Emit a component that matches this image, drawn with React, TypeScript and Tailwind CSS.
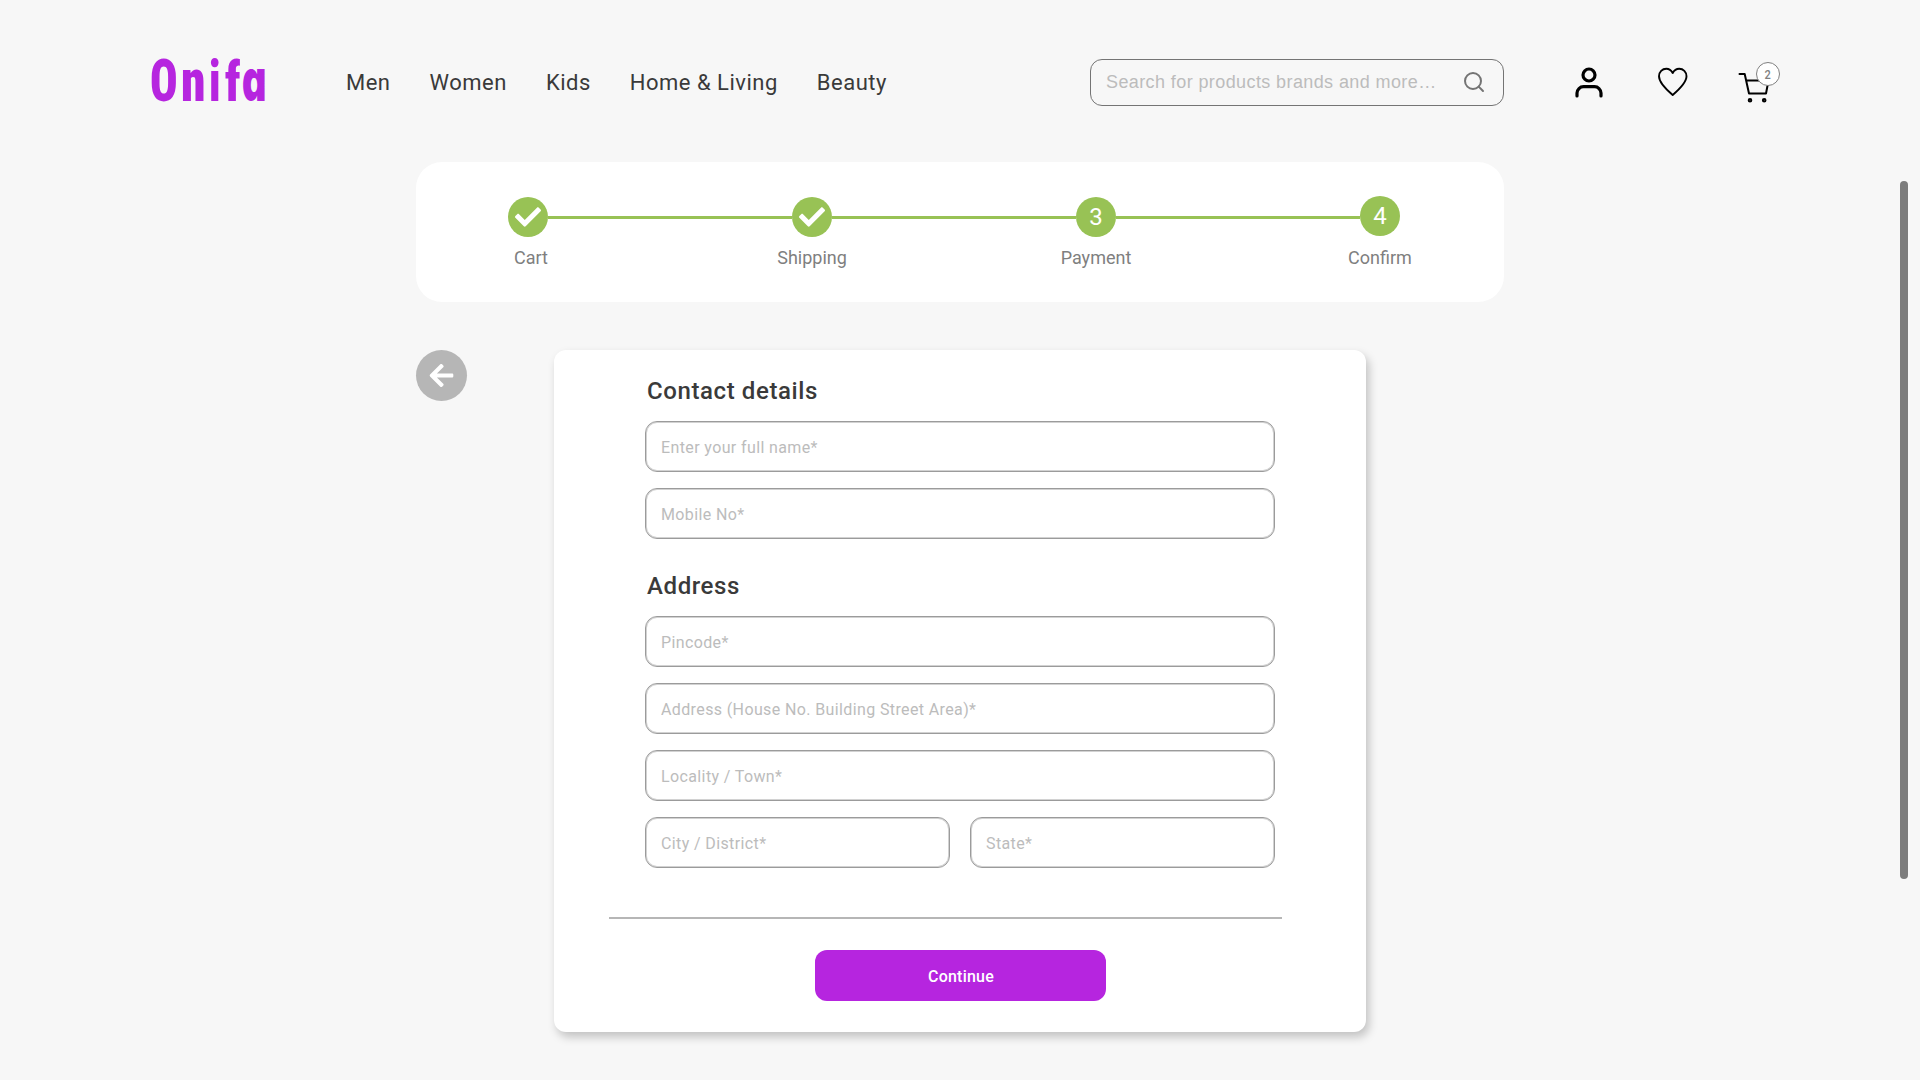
import React from "react";
import { Search } from "lucide-react";
import { FaArrowLeft, FaCheck } from "react-icons/fa";

const navItems = ["Men", "Women", "Kids", "Home & Living", "Beauty"];

const logoLetters = [
  { char: "O", box: "w-[31.9px]", glyph: "scale-x-[0.77]" },
  { char: "n", box: "w-[27.7px]", glyph: "scale-x-[0.83]" },
  { char: "i", box: "w-[15.6px]", glyph: "scale-x-[0.74] scale-y-[0.97]" },
  { char: "f", box: "w-[17.6px]", glyph: "scale-x-[0.78] scale-y-[0.94]" },
  { char: "a", box: "-mt-[2px] w-[26.8px]", glyph: "scale-x-[0.635] scale-y-[0.98] font-['Inter'] [font-feature-settings:'cv11']" },
];

function Logo() {
  return (
    <a href="#" aria-label="Onifa" className="-mt-px flex h-[60px] w-[120px] text-[59.5px] leading-[60px] font-black text-[#b625df] [font-stretch:75%]">
      {logoLetters.map(({ char, box, glyph }) => (
        <span key={char} className={box}>
          <span className={`inline-block origin-[0_83%] ${glyph}`}>{char}</span>
        </span>
      ))}
    </a>
  );
}

function UserIcon() {
  return (
    <svg width="28" height="32" viewBox="0 0 28 32" fill="none" stroke="#000" strokeWidth="3.200" strokeLinecap="round">
      <circle cx="14" cy="9" r="6" />
      <path d="M2 30v-3a6.500 6.500 0 0 1 6.500-6.300h11A6.500 6.500 0 0 1 26 27v3" />
    </svg>
  );
}

function HeartIcon() {
  return (
    <svg width="30" height="30" viewBox="0 0 30 30" fill="none" stroke="#000" strokeWidth="1.900" strokeLinejoin="round">
      <path d="M14.700 6C13.200 3.200 11 1.800 8.300 1.800 4.300 1.800 1 4.800 1 9.300 1 15.500 7 21.500 14.700 28 22.300 21.500 28.500 15.500 28.500 9.300 28.500 4.800 25.200 1.800 21.200 1.800 18.500 1.800 16.200 3.200 14.700 6Z" />
    </svg>
  );
}

function CartIcon() {
  return (
    <svg width="32" height="32" viewBox="0 0 32 32" fill="none" stroke="#000" strokeWidth="2" strokeLinejoin="round" strokeLinecap="round">
      <path d="M1.500 3h5.200l4.300 19.500h17L30.500 9.500H8.200" />
      <circle cx="12" cy="29.300" r="1.300" />
      <circle cx="26.200" cy="29.300" r="1.300" />
    </svg>
  );
}

function Header() {
  return (
    <header className="flex h-[162px] items-start pt-[52px] pl-[149.5px]">
      <Logo />
      <nav className="ml-[76.5px] flex h-[60px] w-[744px] items-center gap-[39px] text-[22px] tracking-[0.5px] text-[#3a3a3a]">
        {navItems.map((item) => (
          <a key={item} href="#">{item}</a>
        ))}
      </nav>
      <div className="mt-[7px] flex h-[47px] w-[414px] items-center justify-between rounded-xl border border-[#747474] pr-[17px] pb-px pl-[15px]">
        <input
          placeholder="Search for products brands and more…"
          className="w-[340px] bg-transparent font-['Liberation_Sans',sans-serif] text-lg tracking-[0.4px] outline-none placeholder:text-[#bcbcbc]"
        />
        <Search size={24} color="#747474" strokeWidth={2} />
      </div>
      <div className="mt-[14px] ml-[71px]"><UserIcon /></div>
      <div className="mt-[15px] ml-[55px]"><HeartIcon /></div>
      <div className="relative mt-[19px] ml-[50px]">
        <CartIcon />
        <span className="absolute -top-[9px] left-[18px] flex size-6 items-center justify-center rounded-full border border-[#808080] bg-white text-[13px] font-medium text-[#808080]">
          <span className="scale-x-[0.85] pt-px">2</span>
        </span>
      </div>
    </header>
  );
}

function Step({ label, children, shift = "", nudge = "" }: { label: string; children: React.ReactNode; shift?: string; nudge?: string }) {
  return (
    <div className="flex w-10 flex-col items-center">
      <div className={`flex size-10 items-center justify-center rounded-full bg-[#98c255] text-2xl text-white ${shift}`}>
        {children}
      </div>
      <span className={`mt-[7px] text-lg text-[#7f7f7f] ${nudge}`}>{label}</span>
    </div>
  );
}

function Connector() {
  return <div className="mt-[19px] h-[3px] flex-1 bg-[#98c255]" />;
}

function Stepper() {
  return (
    <section className="flex h-[140px] w-[1088px] items-start rounded-[26px] bg-white pt-[35px] pr-[104px] pl-[92px]">
      <Step label="Cart" nudge="ml-[6px]"><FaCheck size={26} /></Step>
      <Connector />
      <Step label="Shipping"><FaCheck size={26} /></Step>
      <Connector />
      <Step label="Payment">3</Step>
      <Connector />
      <Step label="Confirm" shift="-mt-px mb-px">4</Step>
    </section>
  );
}

function Field({ placeholder }: { placeholder: string }) {
  return (
    <input
      placeholder={placeholder}
      className="h-[51px] w-full min-w-0 rounded-xl border border-[#9b9b9b] bg-white px-[15px] pt-[2px] text-base tracking-[0.38px] shadow-[inset_0_0_0_1px_#d2d2d2] outline-none placeholder:text-[#bcbcbc]"
    />
  );
}

function SectionTitle({ children }: { children: string }) {
  return <h2 className="ml-[2px] h-[31px] pt-px text-2xl leading-8 font-medium tracking-wide text-[#3a3a3a]">{children}</h2>;
}

function AddressForm() {
  return (
    <form className="ml-[87px] flex h-[682px] w-[812px] flex-col items-center rounded-xl bg-white shadow-[3px_5px_10px_rgba(0,0,0,0.22)]">
      <div className="flex w-[630px] flex-col gap-4 pt-6">
        <SectionTitle>Contact details</SectionTitle>
        <Field placeholder="Enter your full name*" />
        <Field placeholder="Mobile No*" />
        <div className="-mb-4 h-[14px]" />
        <SectionTitle>Address</SectionTitle>
        <Field placeholder="Pincode*" />
        <Field placeholder="Address (House No. Building Street Area)*" />
        <Field placeholder="Locality / Town*" />
        <div className="flex gap-5">
          <Field placeholder="City / District*" />
          <Field placeholder="State*" />
        </div>
      </div>
      <div className="mt-[49px] mr-[30px] h-[2px] w-[673px] bg-[#b6b6b6]" />
      <button type="button" className="mt-[31px] ml-px h-[51px] w-[291px] rounded-xl bg-[#b625df] pt-[2px] pl-px text-base font-medium tracking-[0.2px] text-white">
        Continue
      </button>
    </form>
  );
}

export default function App() {
  return (
    <div className="relative h-[1080px] w-[1920px] overflow-hidden bg-[#f7f7f7] font-['Roboto',sans-serif]">
      <Header />
      <main className="pl-[416px]">
        <Stepper />
        <div className="mt-12 flex items-start">
          <button type="button" aria-label="Back" className="flex size-[51px] items-center justify-center rounded-full bg-[#b6b6b6] text-white">
            <FaArrowLeft size={27} />
          </button>
          <AddressForm />
        </div>
      </main>
      <div className="absolute top-[181px] right-3 h-[698px] w-2 rounded-full bg-[#7c7c7c]" />
    </div>
  );
}
